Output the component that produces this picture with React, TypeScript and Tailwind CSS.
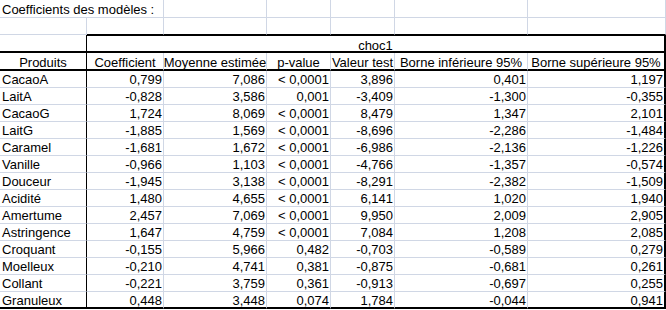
import React from 'react'

type Row = [string, string, string, string, string, string, string]

const headers: Row = [
  'Produits',
  'Coefficient',
  'Moyenne estimée',
  'p-value',
  'Valeur test',
  'Borne inférieure 95%',
  'Borne supérieure 95%',
]

const rows: Row[] = [
  ['CacaoA', '0,799', '7,086', '< 0,0001', '3,896', '0,401', '1,197'],
  ['LaitA', '-0,828', '3,586', '0,001', '-3,409', '-1,300', '-0,355'],
  ['CacaoG', '1,724', '8,069', '< 0,0001', '8,479', '1,347', '2,101'],
  ['LaitG', '-1,885', '1,569', '< 0,0001', '-8,696', '-2,286', '-1,484'],
  ['Caramel', '-1,681', '1,672', '< 0,0001', '-6,986', '-2,136', '-1,226'],
  ['Vanille', '-0,966', '1,103', '< 0,0001', '-4,766', '-1,357', '-0,574'],
  ['Douceur', '-1,945', '3,138', '< 0,0001', '-8,291', '-2,382', '-1,509'],
  ['Acidité', '1,480', '4,655', '< 0,0001', '6,141', '1,020', '1,940'],
  ['Amertume', '2,457', '7,069', '< 0,0001', '9,950', '2,009', '2,905'],
  ['Astringence', '1,647', '4,759', '< 0,0001', '7,084', '1,208', '2,085'],
  ['Croquant', '-0,155', '5,966', '0,482', '-0,703', '-0,589', '0,279'],
  ['Moelleux', '-0,210', '4,741', '0,381', '-0,875', '-0,681', '0,261'],
  ['Collant', '-0,221', '3,759', '0,361', '-0,913', '-0,697', '0,255'],
  ['Granuleux', '0,448', '3,448', '0,074', '1,784', '-0,044', '0,941'],
]

// column widths, right gridline included
const widths = ['w-[87px]', 'w-[77px]', 'w-[103px]', 'w-[64px]', 'w-[64px]', 'w-[133px]', 'w-[138px]']

// right border of a cell inside the framed block
const sideBorder = (i: number) => {
  if (i === 0) return 'border-r border-r-black'
  if (i === 6) return 'border-r-2 border-r-black'
  return 'border-r border-r-[#d0d7e5]'
}

const DataRow: React.FC<{ row: Row; last: boolean }> = ({ row, last }) => (
  <div className="flex h-[17px]">
    {row.map((value, i) => (
      <div
        key={i}
        className={`${widths[i]} flex shrink-0 whitespace-nowrap leading-[17px] ${sideBorder(i)} ${
          last ? 'border-b-2 border-b-black' : 'border-b border-b-[#d0d7e5]'
        } ${i === 0 ? 'justify-start pl-[2px]' : 'justify-end pr-[1px]'}`}
      >
        {value}
      </div>
    ))}
  </div>
)

const App: React.FC = () => {
  return (
    <div className="h-[310px] w-[666px] overflow-hidden bg-white font-['Liberation_Sans',Arial,sans-serif] text-[13px] text-black">
      {/* title row, text spills over column B */}
      <div className="flex h-[18px]">
        <div className="w-[164px] shrink-0 whitespace-nowrap border-b border-r border-[#d0d7e5] pl-[2px] leading-[20px]">
          Coefficients des modèles :
        </div>
        {widths.slice(2).map((w, i) => (
          <div key={i} className={`${w} shrink-0 border-b border-r border-[#d0d7e5]`} />
        ))}
      </div>

      {/* empty row */}
      <div className="flex h-[17px]">
        {widths.map((w, i) => (
          <div
            key={i}
            className={`${w} shrink-0 border-r border-r-[#d0d7e5] border-b ${
              i === 0 ? 'border-b-[#d0d7e5]' : 'border-b-black'
            }`}
          />
        ))}
      </div>

      {/* group header */}
      <div className="flex h-[18px]">
        <div className="w-[86px] shrink-0 border-b-2 border-b-black" />
        <div className="flex w-[580px] shrink-0 justify-center whitespace-nowrap border-t border-b-2 border-l border-r-2 border-black leading-[19px]">
          choc1
        </div>
      </div>

      {/* column headers */}
      <div className="flex h-[18px]">
        {headers.map((h, i) => (
          <div
            key={i}
            className={`${widths[i]} flex shrink-0 justify-center whitespace-nowrap border-b-2 border-b-black leading-[20px] ${sideBorder(i)}`}
          >
            {h}
          </div>
        ))}
      </div>

      {rows.map((row, i) => (
        <DataRow key={row[0]} row={row} last={i === rows.length - 1} />
      ))}
    </div>
  )
}

export default App
